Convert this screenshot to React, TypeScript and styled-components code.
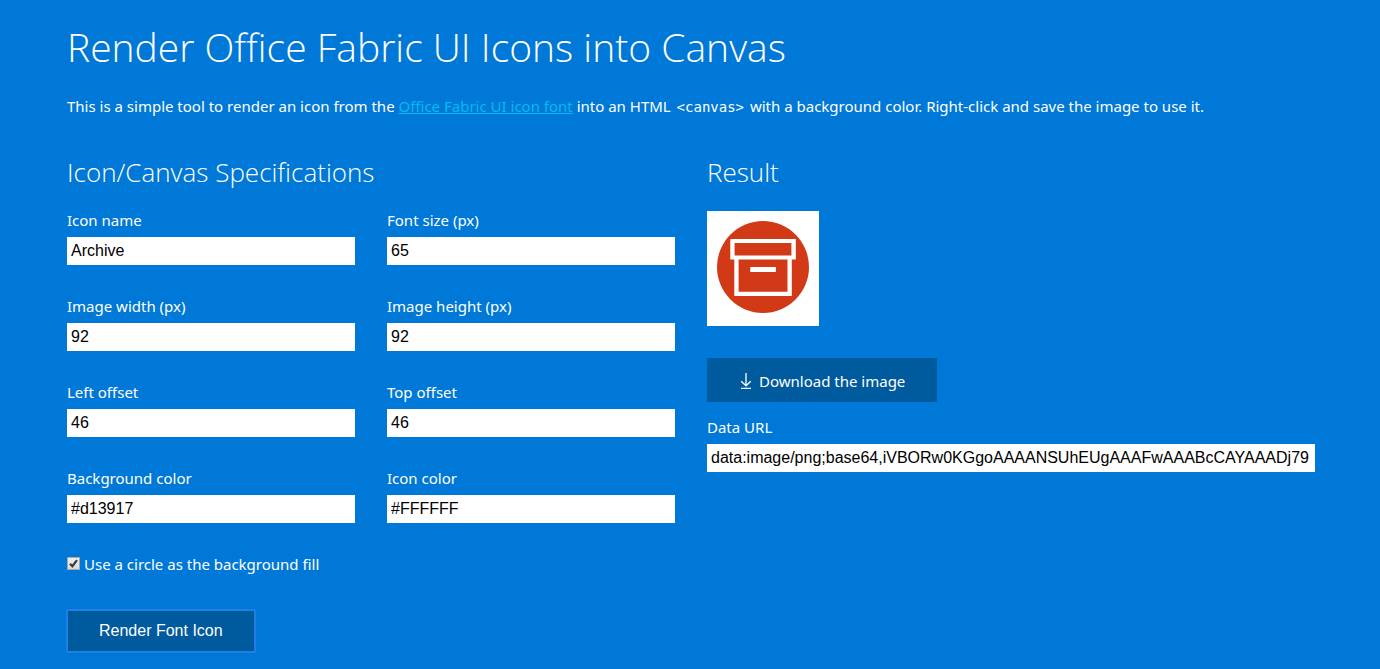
import React, { useState } from "react";
import styled, { createGlobalStyle } from "styled-components";

const GlobalStyle = createGlobalStyle`
  *, *::before, *::after { box-sizing: border-box; }
  body {
    margin: 0;
    background: #0078d7;
    color: #fff;
    font-family: "Segoe UI", "Noto Sans", "Open Sans", sans-serif;
    font-size: 15px;
    line-height: 24px;
  }
`;

const Page = styled.main`
  padding: 19px 65px 16px 67px;
`;

const Title = styled.h1`
  margin: 0;
  font-family: "Segoe UI", "Open Sans", sans-serif;
  font-size: 39px;
  font-weight: 300;
  line-height: 56px;
`;

const Intro = styled.p`
  margin: 19px 0 35px;
`;

const Link = styled.a`
  color: #00bcf2;
  text-decoration: underline;
`;

const Code = styled.code`
  margin: 0 2px;
  font-family: "DejaVu Sans Mono", monospace;
  font-size: 14px;
`;

const Columns = styled.div`
  display: grid;
  grid-template-columns: repeat(2, minmax(0, 1fr));
  gap: 32px;
  align-items: start;
`;

const SectionTitle = styled.h2`
  margin: 0 0 18px;
  font-family: "Segoe UI", "Open Sans", sans-serif;
  font-size: 26px;
  font-weight: 300;
  line-height: 36px;
`;

const Fields = styled.div`
  display: grid;
  grid-template-columns: repeat(2, minmax(0, 1fr));
  gap: 29px 32px;
`;

const FieldBox = styled.div`
  display: flex;
  flex-direction: column;
  gap: 5px;
`;

const Input = styled.input`
  width: 100%;
  height: 28px;
  padding: 0 4px 1px;
  border: 0;
  border-radius: 0;
  background: #fff;
  color: #000;
  font-family: Arial, "Liberation Sans", sans-serif;
  font-size: 16px;
`;

const CheckRow = styled.label`
  display: flex;
  align-items: center;
  gap: 4px;
  margin: 29px 0 34px;
`;

const CheckMark = styled.span`
  display: grid;
  width: 13px;
  height: 13px;
  margin-bottom: 2px;

  > * {
    grid-area: 1 / 1;
  }

  > svg {
    pointer-events: none;
  }
`;

const CheckInput = styled.input`
  appearance: none;
  width: 13px;
  height: 13px;
  margin: 0;
  border: 1px solid #a9a9a9;
  background: linear-gradient(#eee, #dcdcdc);
`;

const RenderButton = styled.button`
  height: 42px;
  padding: 0 32px;
  border: 0;
  outline: 2px solid #1f7fe4;
  outline-offset: -1px;
  border-radius: 1px;
  background: #005a9e;
  color: #fff;
  font-family: Arial, "Liberation Sans", sans-serif;
  font-size: 16px;
`;

const Preview = styled.div`
  width: fit-content;
  margin: 21px 0 32px;
  padding: 10px 10px 13px;
  background: #fff;

  > svg {
    display: block;
  }
`;

const DownloadLink = styled.a`
  display: flex;
  align-items: center;
  gap: 6px;
  width: fit-content;
  height: 44px;
  margin-bottom: 13px;
  padding: 2px 32px 0;
  background: #005a9e;
  color: #fff;
  text-decoration: none;
`;

interface FieldProps {
  id: string;
  label: string;
  initial: string;
}

function Field({ id, label, initial }: FieldProps) {
  const [value, setValue] = useState(initial);
  return (
    <FieldBox>
      <label htmlFor={id}>{label}</label>
      <Input id={id} type="text" value={value} onChange={(e) => setValue(e.target.value)} />
    </FieldBox>
  );
}

const specs: FieldProps[] = [
  { id: "icon-name", label: "Icon name", initial: "Archive" },
  { id: "font-size", label: "Font size (px)", initial: "65" },
  { id: "image-width", label: "Image width (px)", initial: "92" },
  { id: "image-height", label: "Image height (px)", initial: "92" },
  { id: "left-offset", label: "Left offset", initial: "46" },
  { id: "top-offset", label: "Top offset", initial: "46" },
  { id: "background-color", label: "Background color", initial: "#d13917" },
  { id: "icon-color", label: "Icon color", initial: "#FFFFFF" },
];

function ArchiveIcon() {
  return (
    <svg width="92" height="92" viewBox="0 0 92 92" role="img" aria-label="Archive">
      <circle cx="46" cy="46" r="46" fill="#d13917" />
      <path
        fill="#fff"
        fillRule="evenodd"
        d="M13.3 18H78.8V38.6H74.8V74.9H17.3V38.6H13.3ZM17.6 22.1V34.4H74.4V22.1ZM21.6 38.6V70.7H70.5V38.6ZM33.3 46H58.9V50.9H33.3Z"
      />
    </svg>
  );
}

function DownloadIcon() {
  return (
    <svg width="14" height="16" viewBox="0 0 14 16" fill="none" stroke="#fff" aria-hidden="true">
      <path d="M7 0V12.5M2.2 8.2L7 12.8L11.8 8.2M2 15.5H12" strokeWidth="1.3" />
    </svg>
  );
}

export default function App() {
  const [circle, setCircle] = useState(true);
  return (
    <>
      <GlobalStyle />
      <Page>
        <Title>Render Office Fabric UI Icons into Canvas</Title>
        <Intro>
          This is a simple tool to render an icon from the{" "}
          <Link href="#icons">Office Fabric UI icon font</Link> into an HTML{" "}
          <Code>&lt;canvas&gt;</Code> with a background color. Right-click and save the image to use it.
        </Intro>
        <Columns>
          <section>
            <SectionTitle>Icon/Canvas Specifications</SectionTitle>
            <Fields>
              {specs.map((spec) => (
                <Field key={spec.id} {...spec} />
              ))}
            </Fields>
            <CheckRow>
              <CheckMark>
                <CheckInput
                  type="checkbox"
                  checked={circle}
                  onChange={(e) => setCircle(e.target.checked)}
                />
                {circle && (
                  <svg width="13" height="13" viewBox="0 0 13 13" fill="none" aria-hidden="true">
                    <path d="M3 6.7L5.4 9.2L10 3.2" stroke="#3c3c3c" strokeWidth="2.2" />
                  </svg>
                )}
              </CheckMark>
              Use a circle as the background fill
            </CheckRow>
            <RenderButton type="button">Render Font Icon</RenderButton>
          </section>
          <section>
            <SectionTitle>Result</SectionTitle>
            <Preview>
              <ArchiveIcon />
            </Preview>
            <DownloadLink href="#download">
              <DownloadIcon />
              Download the image
            </DownloadLink>
            <Field
              id="data-url"
              label="Data URL"
              initial="data:image/png;base64,iVBORw0KGgoAAAANSUhEUgAAAFwAAABcCAYAAADj79"
            />
          </section>
        </Columns>
      </Page>
    </>
  );
}
